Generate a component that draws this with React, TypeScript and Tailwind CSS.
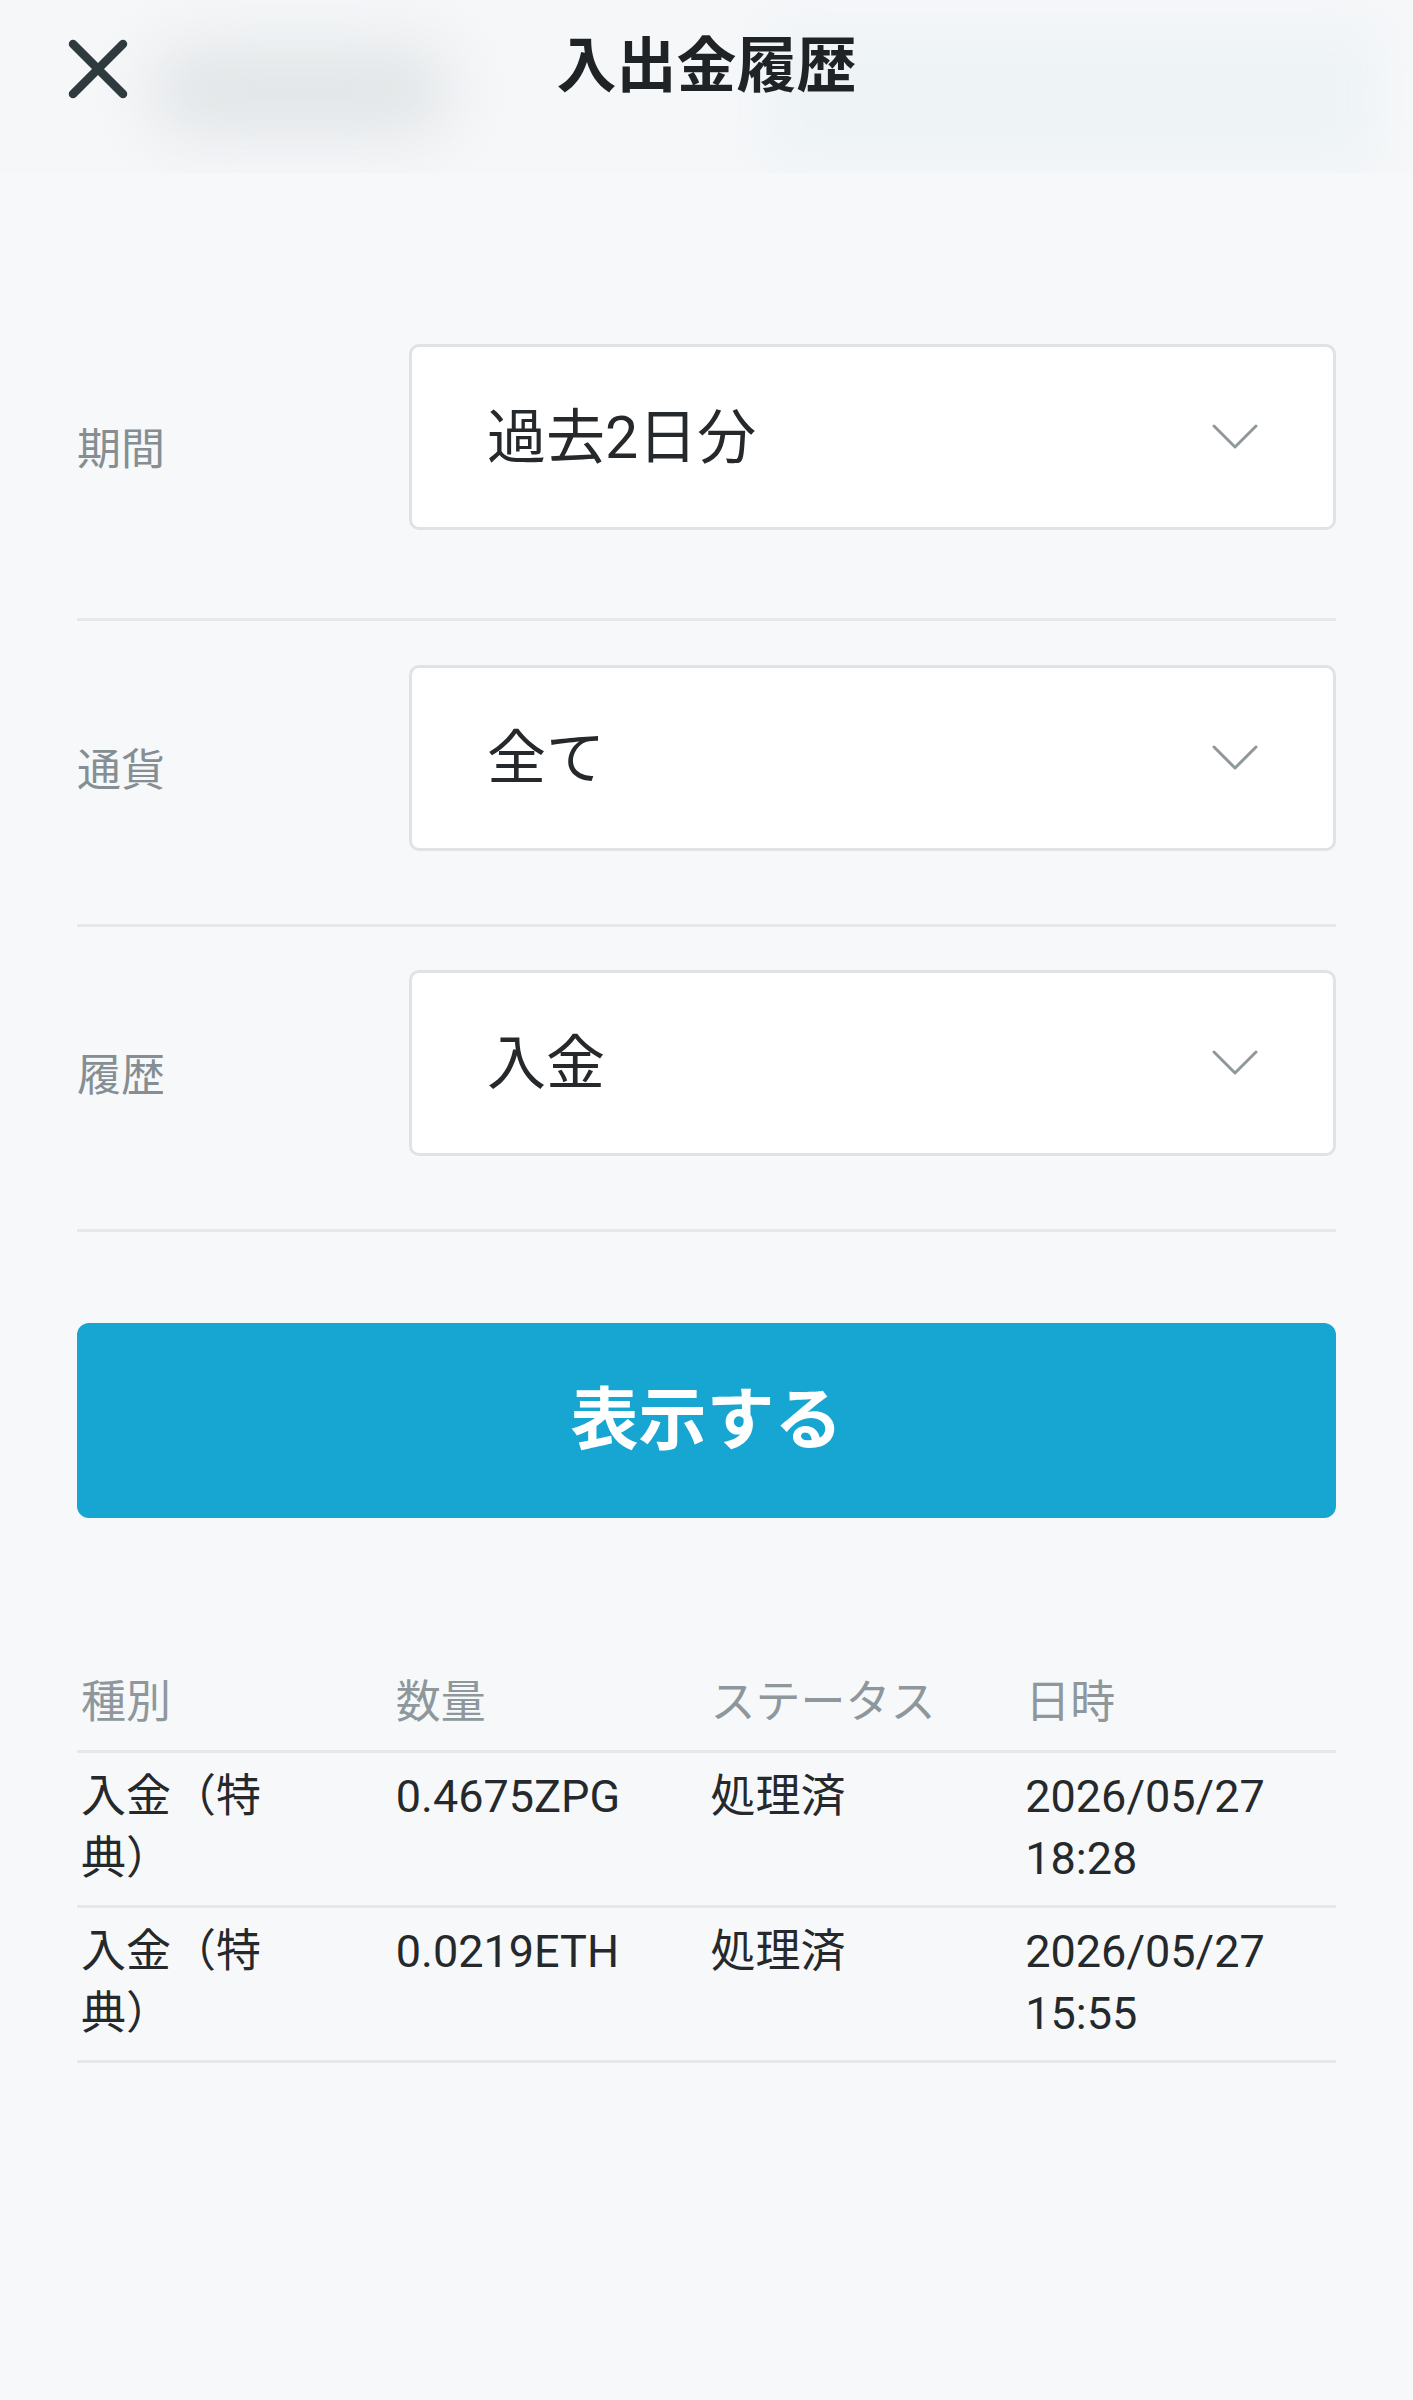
import React from "react";

const FONT = { fontFamily: 'Roboto, "Noto Sans CJK JP", "Noto Sans", sans-serif' };

function Chevron() {
  return (
    <svg width="46" height="26" viewBox="0 0 46 26" fill="none">
      <path d="M2 2 L23 23 L44 2" stroke="#8f999c" strokeWidth="3" strokeLinecap="round" strokeLinejoin="round" />
    </svg>
  );
}

function SelectRow({
  label,
  value,
  pt,
  pb,
}: {
  label: string;
  value: string;
  pt: string;
  pb: string;
}) {
  return (
    <div className={`flex items-center border-b-[3px] border-[#e6e9eb] ${pt} ${pb}`}>
      <div className="w-[332px] mt-[26px] text-[44px] leading-none text-[#858f93]">{label}</div>
      <div className="flex h-[186px] flex-1 items-center justify-between rounded-[10px] border-[3px] border-[#dfe3e5] bg-white pl-[75px] pr-[75px]">
        <span className="text-[59px] leading-none text-[#25292b]">{value}</span>
        <Chevron />
      </div>
    </div>
  );
}

const rows = [
  { type: "入金（特典）", amount: "0.4675ZPG", status: "処理済", date: "2026/05/27", time: "18:28" },
  { type: "入金（特典）", amount: "0.0219ETH", status: "処理済", date: "2026/05/27", time: "15:55" },
];

export default function App() {
  return (
    <div className="min-h-[2400px] w-[1413px] bg-[#f7f8fa]" style={FONT}>
      {/* Header */}
      <div className="relative h-[173px] overflow-hidden bg-[#f5f7f9]">
        <div className="absolute left-[150px] top-[45px] h-[90px] w-[300px] rounded-full bg-[#e2e5e7] blur-[30px]" />
        <div className="absolute left-[770px] top-[30px] h-[135px] w-[600px] rounded-[20px] bg-[#eef3f6] blur-[20px]" />
        <div className="relative flex h-[134px] items-center justify-center">
          <svg className="absolute left-[64px] top-[35px]" width="68" height="68" viewBox="0 0 68 68" fill="none">
            <path d="M9 9 L59 59 M59 9 L9 59" stroke="#2e3a3d" strokeWidth="8.5" strokeLinecap="round" />
          </svg>
          <h1 className="text-[60px] font-bold leading-none text-[#1f2325]">入出金履歴</h1>
        </div>
      </div>

      <div className="px-[77px]">
        <SelectRow label="期間" value="過去2日分" pt="pt-[171px]" pb="pb-[88px]" />
        <SelectRow label="通貨" value="全て" pt="pt-[44px]" pb="pb-[73px]" />
        <SelectRow label="履歴" value="入金" pt="pt-[43px]" pb="pb-[73px]" />

        <button className="mt-[91px] flex h-[195px] w-full items-center justify-center rounded-[12px] bg-[#17a5d2]">
          <span className="text-[68px] font-bold leading-none text-white">表示する</span>
        </button>

        {/* Table */}
        <div className="mt-[154px]">
          <div className="grid grid-cols-4 border-b-[3px] border-[#e6e9eb] pb-[16px] text-[45px] leading-[62px] text-[#8e989c]">
            <div className="pl-[4px]">種別</div>
            <div className="pl-[4px]">数量</div>
            <div className="pl-[4px]">ステータス</div>
            <div className="pl-[4px]">日時</div>
          </div>
          {rows.map((r, i) => (
            <div
              key={i}
              className="grid grid-cols-4 border-b-[3px] border-[#e6e9eb] pt-[13px] pb-[15px] text-[45px] leading-[62px] text-[#25292b]"
            >
              <div className="pl-[4px]">
                <div className="w-[200px]">{r.type}</div>
              </div>
              <div className="pl-[4px]">{r.amount}</div>
              <div className="pl-[4px]">{r.status}</div>
              <div className="pl-[4px]">
                <div>{r.date}</div>
                <div>{r.time}</div>
              </div>
            </div>
          ))}
        </div>
      </div>
    </div>
  );
}
